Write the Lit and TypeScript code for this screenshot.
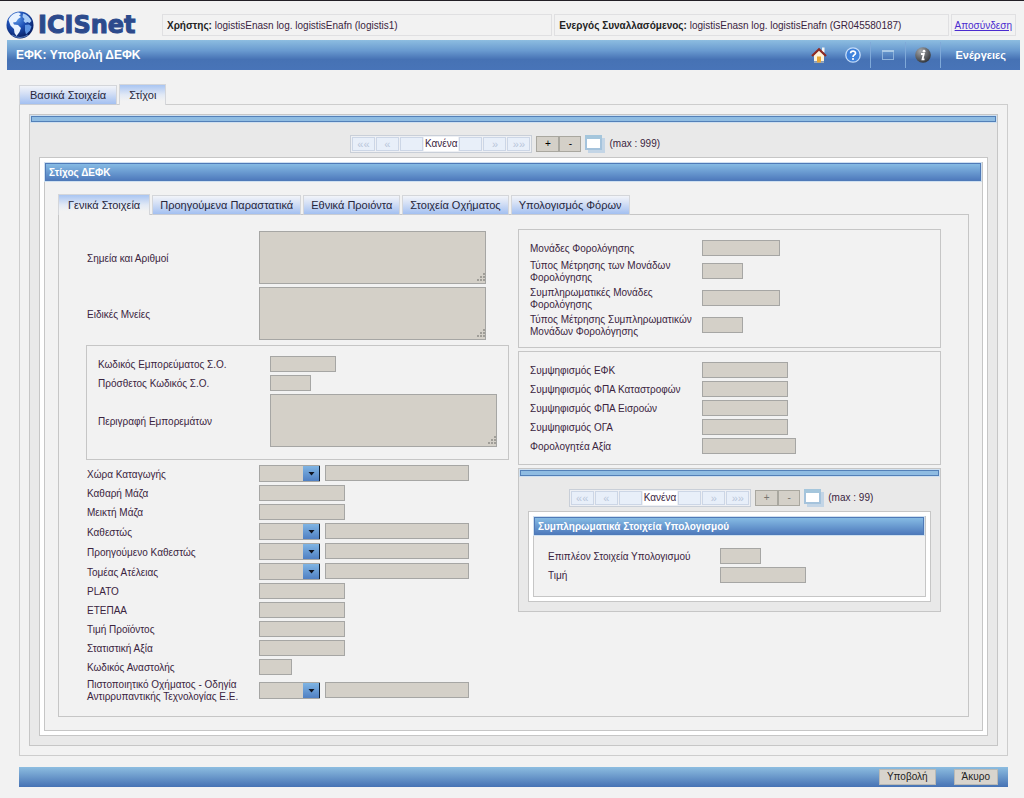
import { LitElement, html, css, svg } from "lit";
import { customElement, property } from "lit/decorators.js";

interface Field {
  label: string;
  kind: "text" | "combo" | "area";
  size?: string;
}

const SIGNS: Field[] = [
  { label: "Σημεία και Αριθμοί", kind: "area" },
  { label: "Ειδικές Μνείες", kind: "area" },
];

const GOODS: Field[] = [
  { label: "Κωδικός Εμπορεύματος Σ.Ο.", kind: "text", size: "w66" },
  { label: "Πρόσθετος Κωδικός Σ.Ο.", kind: "text", size: "w41" },
  { label: "Περιγραφή Εμπορεμάτων", kind: "area" },
];

const DETAILS: Field[] = [
  { label: "Χώρα Καταγωγής", kind: "combo" },
  { label: "Καθαρή Μάζα", kind: "text", size: "w86" },
  { label: "Μεικτή Μάζα", kind: "text", size: "w86" },
  { label: "Καθεστώς", kind: "combo" },
  { label: "Προηγούμενο Καθεστώς", kind: "combo" },
  { label: "Τομέας Ατέλειας", kind: "combo" },
  { label: "PLATO", kind: "text", size: "w86" },
  { label: "ΕΤΕΠΑΑ", kind: "text", size: "w86" },
  { label: "Τιμή Προϊόντος", kind: "text", size: "w86" },
  { label: "Στατιστική Αξία", kind: "text", size: "w86" },
  { label: "Κωδικός Αναστολής", kind: "text", size: "w33" },
  { label: "Πιστοποιητικό Οχήματος - Οδηγία Αντιρρυπαντικής Τεχνολογίας Ε.Ε.", kind: "combo" },
];

const UNITS: Field[] = [
  { label: "Μονάδες Φορολόγησης", kind: "text", size: "w78" },
  { label: "Τύπος Μέτρησης των Μονάδων Φορολόγησης", kind: "text", size: "w41" },
  { label: "Συμπληρωματικές Μονάδες Φορολόγησης", kind: "text", size: "w78" },
  { label: "Τύπος Μέτρησης Συμπληρωματικών Μονάδων Φορολόγησης", kind: "text", size: "w41" },
];

const OFFSETS: Field[] = [
  { label: "Συμψηφισμός ΕΦΚ", kind: "text", size: "w86" },
  { label: "Συμψηφισμός ΦΠΑ Καταστροφών", kind: "text", size: "w86" },
  { label: "Συμψηφισμός ΦΠΑ Εισροών", kind: "text", size: "w86" },
  { label: "Συμψηφισμός ΟΓΑ", kind: "text", size: "w86" },
  { label: "Φορολογητέα Αξία", kind: "text", size: "w94" },
];

const EXTRA: Field[] = [
  { label: "Επιπλέον Στοιχεία Υπολογισμού", kind: "text", size: "w41" },
  { label: "Τιμή", kind: "text", size: "w86" },
];

const globe = svg`
  <defs>
    <radialGradient id="sea" cx="38%" cy="28%" r="75%">
      <stop offset="0" stop-color="#5d9bea"/>
      <stop offset=".45" stop-color="#1d4fb4"/>
      <stop offset="1" stop-color="#061a5c"/>
    </radialGradient>
  </defs>
  <circle cx="14" cy="14" r="13.5" fill="url(#sea)"/>
  <path d="M2.500 9C5 3.500 9 1.500 13 1.500L15 3l-2 1.500 2 1.500-3 2-2 3-3 .500 1 2 4 .500 3 3-1.500 4-3 4-2-3-.500-4-3.500-3.500z" fill="#e8f2ff"/>
  <path d="M17 2.500c4 1 7 4 8.500 7.500l-2 2-2-1-2 1-2-2 1-2-2-2z" fill="#a9ccf7"/>
  <path d="M19 14l4-.500 2.500 2-1.500 4-4 4-1-4z" fill="#5c93e2"/>
  <path d="M6 24q8 5 16 0" stroke="#7aa8ea" fill="none" opacity=".7"/>`;

const home = svg`
  <path d="M11 .500h2.500v5H11z" fill="#f4f4f4"/>
  <path d="M3 8L8 3.500 13 8v7.500H3z" fill="#fdf3da"/>
  <path d="M3 14h10v1.500H3z" fill="#8d9db4"/>
  <path d="M6 9.500h4v6H6z" fill="#e6a637"/>
  <path d="M1 9L8 2.300 15 9" stroke="#8f2a22" stroke-width="2.200" fill="none"/>`;

const help = svg`
  <circle cx="8" cy="8" r="7.200" fill="#3f82dc" stroke="#c5dcf8" stroke-width="1.300"/>
  <path d="M5.600 6.300C5.600 3.300 10.600 3.400 10.500 6.200 10.400 7.900 8 7.900 8 9.900" stroke="#fff" stroke-width="1.700" fill="none"/>
  <circle cx="8" cy="12" r="1.100" fill="#fff"/>`;

const frame = svg`
  <rect x="2.500" y="3.500" width="11" height="9" fill="none" stroke="#8fb3da"/>
  <path d="M2 4h12" stroke="#a9c9e6" stroke-width="2"/>`;

const info = svg`
  <defs>
    <radialGradient id="steel" cx="35%" cy="25%" r="80%">
      <stop offset="0" stop-color="#a5a8ab"/>
      <stop offset="1" stop-color="#303338"/>
    </radialGradient>
  </defs>
  <circle cx="8" cy="8" r="7.800" fill="url(#steel)"/>
  <circle cx="9" cy="4.200" r="1.400" fill="#fff"/>
  <path d="M6 7H8.800L7.500 12.300H9.500" stroke="#fff" stroke-width="1.800" fill="none"/>`;

const base = css`
  :host {
    display: block;
  }
  * {
    box-sizing: border-box;
  }
  button,
  input,
  select,
  textarea {
    margin: 0;
    font: inherit;
    color: inherit;
    border-radius: 0;
  }
`;

@customElement("field-rows")
class FieldRows extends LitElement {
  @property({ attribute: false }) fields: Field[] = [];

  static styles = [
    base,
    css`
      .rows {
        display: flex;
        flex-direction: column;
        gap: 3px;
      }
      .row {
        display: grid;
        grid-template-columns: 172px 1fr;
        align-items: center;
        line-height: 12px;
      }
      .row label {
        padding: 1px 8px 0 0;
        margin-bottom: -1px;
      }
      .row .controls {
        display: flex;
        gap: 5px;
      }
      .field {
        height: 16px;
        border: 1px solid #a6a6a4;
        background-color: #d4d0c8;
        padding: 0 2px;
      }
      .w33 { width: 33px; }
      .w41 { width: 41px; }
      .w66 { width: 66px; }
      .w78 { width: 78px; }
      .w86 { width: 86px; }
      .w94 { width: 94px; }
      .w144 { width: 144px; }
      textarea.field {
        display: block;
        width: 227px;
        height: 53px;
        resize: both;
      }
      textarea.field::-webkit-resizer {
        background: url("data:image/svg+xml,%3Csvg xmlns='http://www.w3.org/2000/svg' width='10' height='10'%3E%3Cpath d='M8 0h2v2H8zM5 3h2v2H5zM8 3h2v2H8zM2 6h2v2H2zM5 6h2v2H5zM8 6h2v2H8z' fill='%23a09e98'/%3E%3C/svg%3E")
          no-repeat right bottom;
      }
      select.field {
        appearance: none;
        width: 61px;
        height: 17px;
        background-image: url("data:image/svg+xml,%3Csvg xmlns='http://www.w3.org/2000/svg' width='17' height='17'%3E%3Cdefs%3E%3ClinearGradient id='g' x2='0' y2='1'%3E%3Cstop stop-color='%2382b8e6'/%3E%3Cstop offset='1' stop-color='%234d7cc0'/%3E%3C/linearGradient%3E%3C/defs%3E%3Cpath fill='url(%23g)' d='M0 0h17v17H0z'/%3E%3Cpath d='M16.500 0v16.500H0' fill='none' stroke='%23112033'/%3E%3Cpath d='M5.500 7h6l-3 3.500z' fill='%23101420'/%3E%3C/svg%3E");
        background-repeat: no-repeat;
        background-origin: border-box;
        background-position: right top;
        border-right: 0;
      }
    `,
  ];

  control(f: Field, id: string) {
    if (f.kind === "area") return html`<textarea class="field" id=${id} readonly></textarea>`;
    if (f.kind === "combo")
      return html`<select class="field" id=${id}><option></option></select>
        <input class="field w144" aria-label=${f.label} readonly />`;
    return html`<input class="field ${f.size}" id=${id} readonly />`;
  }

  render() {
    return html`<div class="rows">
      ${this.fields.map(
        (f, i) => html`<div class="row">
          <label for="f${i}">${f.label}</label>
          <div class="controls">${this.control(f, `f${i}`)}</div>
        </div>`
      )}
    </div>`;
  }
}

@customElement("tab-strip")
class TabStrip extends LitElement {
  @property({ attribute: false }) tabs: string[] = [];
  @property({ type: Number }) active = 0;
  @property({ type: Boolean }) dense = false;

  static styles = [
    base,
    css`
      :host {
        margin-bottom: -1px;
        position: relative;
      }
      .tabs {
        display: flex;
        align-items: flex-end;
        gap: 2px;
      }
      .tab {
        height: 20px;
        padding: 0 10px;
        border: 1px solid #d4d6da;
        border-bottom-color: #c8ccd4;
        font-size: 11px;
        line-height: 18px;
        white-space: nowrap;
        color: #26263c;
        background: linear-gradient(#f2f4f9, #d5e0f5 40%, #a3c0f1);
      }
      .dense .tab {
        padding: 0 7px;
      }
      .tab.on {
        height: 21px;
        padding: 0 9px;
        border-bottom: 0;
        background: linear-gradient(#a9c5f2, #e2e9f5 50%, #f2f2f2 80%);
      }
    `,
  ];

  render() {
    return html`<div class="tabs ${this.dense ? "dense" : ""}" role="tablist">
      ${this.tabs.map(
        (t, i) => html`<button
          class="tab ${i === this.active ? "on" : ""}"
          role="tab"
          aria-selected=${i === this.active}
        >${t}</button>`
      )}
    </div>`;
  }
}

@customElement("record-panel")
class RecordPanel extends LitElement {
  @property() heading = "";
  @property() max = "";
  @property({ type: Boolean }) locked = false;

  static styles = [
    base,
    css`
      .outer {
        border: 1px solid #c6c6c6;
        background: #e9e9e9;
        padding-bottom: 9px;
      }
      .strip {
        height: 6px;
        margin: 1px 1px 0;
        border: 1px solid #5380b8;
        box-shadow: 0 0 0 1px #cfe0f0;
        background: #8fbce2;
      }
      .pager {
        display: flex;
        align-items: center;
        justify-content: center;
        padding: 13px 17px 4px 0;
      }
      .steps {
        display: flex;
        gap: 1px;
        height: 18px;
        padding: 1px;
        border: 1px solid #c9cfd8;
        background: #eef0f4;
      }
      .step {
        width: 23px;
        padding: 0;
        border: 1px solid #ccd6e6;
        background: #e8eff9;
        color: #b9c6da;
        font-size: 11px;
        line-height: 12px;
      }
      .current {
        padding: 0 1px;
        background: #fff;
        line-height: 14px;
      }
      .op {
        width: 22px;
        height: 16px;
        padding: 0;
        border: 1px solid #a9a79f;
        background: #d4d0c8;
        line-height: 12px;
        color: #000;
      }
      .op.first {
        width: 23px;
        margin-left: 4px;
      }
      .op.locked {
        color: #77756f;
      }
      .list {
        width: 20px;
        height: 18px;
        margin: 0 4px;
        padding: 0;
        border: 0;
        background: none;
      }
      .list svg {
        display: block;
      }
      .white {
        margin: 0 9px;
        padding: 4px;
        border: 1px solid #c6c6c6;
        background: #fff;
      }
      .inner {
        border: 1px solid #c6c6c6;
        background: #f2f2f2;
      }
      .title {
        margin: 0 1px 1px 0;
        height: 18px;
        padding: 0 3px;
        border: 1px solid #4f7ab8;
        box-shadow: 0 0 0 1px #cfe0f0;
        background: linear-gradient(#86bbe4, #4f7bbd);
        color: #fff;
        font-size: 10px;
        line-height: 18px;
        font-weight: bold;
      }
    `,
  ];

  step(glyph: string, name: string) {
    return html`<button class="step" aria-label=${name}>${glyph}</button>`;
  }

  render() {
    const lock = this.locked ? "locked" : "";
    return html`<section class="outer">
      <div class="strip"></div>
      <div class="pager">
        <div class="steps">
          ${this.step("««", "Πρώτο")}${this.step("«", "Προηγούμενο")}${this.step("", "Από")}
          <span class="current">Κανένα</span>
          ${this.step("", "Έως")}${this.step("»", "Επόμενο")}${this.step("»»", "Τελευταίο")}
        </div>
        <button class="op first ${lock}">+</button>
        <button class="op ${lock}">-</button>
        <button class="list" aria-label="Λίστα">
          <svg width="20" height="18" viewBox="0 0 20 18">
            <path d="M3 3h17v15H3z" fill="#c3d5e6" />
            <path d="M1 1h15v13H1z" fill="#fff" stroke="#a5c3dc" stroke-width="2" />
            <path d="M0 0h17v4H0z" fill="#a5c6dc" />
          </svg>
        </button>
        <span>(max : ${this.max})</span>
      </div>
      <div class="white">
        <div class="inner">
          <h2 class="title">${this.heading}</h2>
          <slot></slot>
        </div>
      </div>
    </section>`;
  }
}

@customElement("app-root")
class AppRoot extends LitElement {
  static styles = [
    base,
    css`
      :host {
        min-height: 100vh;
        box-sizing: border-box;
        background: #f2f2f2;
        border-top: 1px solid #221f26;
        font-family: "Liberation Sans", Arial, sans-serif;
        font-size: 10px;
        line-height: 12px;
        color: #3a2440;
      }
      .head {
        display: flex;
        align-items: center;
        height: 39px;
        padding: 8px 8px 0 6px;
      }
      .logo {
        display: flex;
        align-items: center;
        gap: 4px;
        width: 156px;
        font: bold 24px/28px "DejaVu Sans", sans-serif;
        color: #2c4a8c;
        -webkit-text-stroke: 1px #2c4a8c;
      }
      .facts {
        display: flex;
        flex: 1;
        gap: 2px;
      }
      .fact {
        flex: 391 1 0;
        height: 22px;
        padding: 0 4px;
        border: 1px solid #e0e0e2;
        line-height: 22px;
        white-space: nowrap;
      }
      .fact.partner {
        flex-grow: 395;
      }
      .fact.exit {
        flex: none;
        padding: 0 3px;
      }
      .fact b {
        color: #222;
      }
      .fact a {
        color: #4a2bd0;
      }
      .bar {
        display: flex;
        align-items: center;
        height: 30px;
        margin: 0 4px 0 7px;
        padding: 0 14px 0 9px;
        background: linear-gradient(#8dbde0, #6a9bd0 35%, #4672b4 65%, #4874b8);
        color: #fff;
        font-size: 11px;
        font-weight: bold;
      }
      .bar h1 {
        flex: 1;
        margin: 0;
        font-size: 12px;
      }
      .tool {
        display: flex;
        align-items: center;
        justify-content: center;
        width: 34px;
        height: 26px;
        padding: 0;
        border: 0;
        background: none;
      }
      .tool.split {
        width: 35px;
        border-left: 1px solid #7fa9d8;
      }
      .actions {
        height: 26px;
        padding: 0 0 0 14px;
        border: 0;
        border-left: 1px solid #7fa9d8;
        background: none;
      }
      .page {
        margin: 14px 16px 0 19px;
      }
      .sheet {
        border: 1px solid #cdcdcd;
        padding: 9px;
      }
      .item {
        padding: 12px 13px 13px;
      }
      .form {
        display: grid;
        grid-template-columns: 1fr 1fr;
        align-items: start;
        gap: 9px;
        border: 1px solid #c6c6c6;
        padding: 14px 27px;
      }
      .col {
        display: flex;
        flex-direction: column;
      }
      .col.right {
        gap: 3px;
      }
      .plain {
        padding-left: 1px;
      }
      .col.left {
        gap: 5px;
        padding-top: 2px;
      }
      .group {
        border: 1px solid #c6c6c6;
        padding: 10px 11px;
      }
      .group.goods {
        padding-bottom: 12px;
      }
      .extra {
        padding: 12px 14px 13px;
      }
      .foot {
        display: flex;
        align-items: center;
        justify-content: flex-end;
        gap: 18px;
        height: 20px;
        margin-top: 11px;
        padding-right: 10px;
        background: linear-gradient(#8dbde0, #4672b4);
      }
      .foot button {
        height: 16px;
        padding: 0 7px;
        border: 1px solid #b9b9b5;
        background: #d8d4cd;
        line-height: 12px;
        color: #222;
      }
    `,
  ];

  icon(art: unknown, name: string, split = false) {
    return html`<button class="tool ${split ? "split" : ""}" aria-label=${name}>
      <svg width="16" height="16" viewBox="0 0 16 16">${art}</svg>
    </button>`;
  }

  render() {
    return html`
      <header>
        <div class="head">
          <div class="logo">
            <svg width="28" height="28" viewBox="0 0 28 28" aria-hidden="true">${globe}</svg>
            <span>ICISnet</span>
          </div>
          <div class="facts">
            <div class="fact"><b>Χρήστης:</b> logistisEnasn log. logistisEnafn (logistis1)</div>
            <div class="fact partner"><b>Ενεργός Συναλλασόμενος:</b> logistisEnasn log. logistisEnafn (GR045580187)</div>
            <div class="fact exit"><a href="#">Αποσύνδεση</a></div>
          </div>
        </div>
        <div class="bar">
          <h1>ΕΦΚ: Υποβολή ΔΕΦΚ</h1>
          ${this.icon(home, "Αρχική")} ${this.icon(help, "Βοήθεια")}
          ${this.icon(frame, "Παράθυρο", true)} ${this.icon(info, "Πληροφορίες", true)}
          <button class="actions">Ενέργειες</button>
        </div>
      </header>
      <main class="page">
        <tab-strip .tabs=${["Βασικά Στοιχεία", "Στίχοι"]} active="1"></tab-strip>
        <div class="sheet">
          <record-panel heading="Στίχος ΔΕΦΚ" max="999">
            <div class="item">
              <tab-strip
                dense
                .tabs=${["Γενικά Στοιχεία", "Προηγούμενα Παραστατικά", "Εθνικά Προιόντα", "Στοιχεία Οχήματος", "Υπολογισμός Φόρων"]}
                active="0"
              ></tab-strip>
              <div class="form">
                <div class="col left">
                  <field-rows class="plain" .fields=${SIGNS}></field-rows>
                  <div class="group goods"><field-rows .fields=${GOODS}></field-rows></div>
                  <field-rows class="plain" .fields=${DETAILS}></field-rows>
                </div>
                <div class="col right">
                  <div class="group"><field-rows .fields=${UNITS}></field-rows></div>
                  <div class="group"><field-rows .fields=${OFFSETS}></field-rows></div>
                  <record-panel heading="Συμπληρωματικά Στοιχεία Υπολογισμού" max="99" locked>
                    <div class="extra"><field-rows .fields=${EXTRA}></field-rows></div>
                  </record-panel>
                </div>
              </div>
            </div>
          </record-panel>
        </div>
        <footer class="foot">
          <button>Υποβολή</button>
          <button>Άκυρο</button>
        </footer>
      </main>
    `;
  }
}
